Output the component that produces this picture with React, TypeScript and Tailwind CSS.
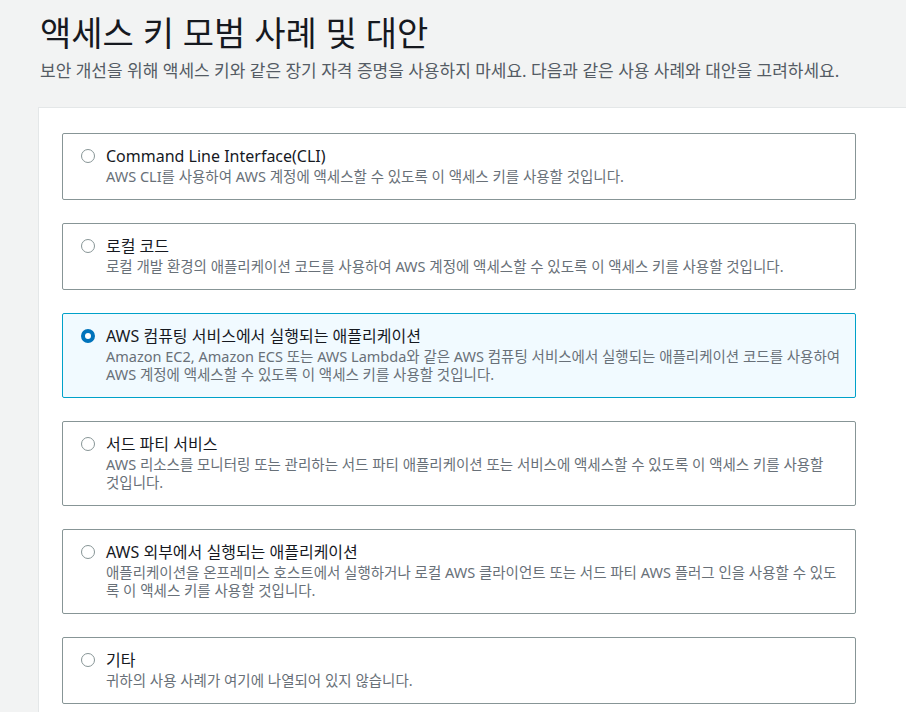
import React from "react";

const items = [
  {
    title: "Command Line Interface(CLI)",
    desc: "AWS CLI를 사용하여 AWS 계정에 액세스할 수 있도록 이 액세스 키를 사용할 것입니다.",
  },
  {
    title: "로컬 코드",
    desc: "로컬 개발 환경의 애플리케이션 코드를 사용하여 AWS 계정에 액세스할 수 있도록 이 액세스 키를 사용할 것입니다.",
  },
  {
    title: "AWS 컴퓨팅 서비스에서 실행되는 애플리케이션",
    desc: "Amazon EC2, Amazon ECS 또는 AWS Lambda와 같은 AWS 컴퓨팅 서비스에서 실행되는 애플리케이션 코드를 사용하여 AWS 계정에 액세스할 수 있도록 이 액세스 키를 사용할 것입니다.",
    selected: true,
  },
  {
    title: "서드 파티 서비스",
    desc: "AWS 리소스를 모니터링 또는 관리하는 서드 파티 애플리케이션 또는 서비스에 액세스할 수 있도록 이 액세스 키를 사용할 것입니다.",
  },
  {
    title: "AWS 외부에서 실행되는 애플리케이션",
    desc: "애플리케이션을 온프레미스 호스트에서 실행하거나 로컬 AWS 클라이언트 또는 서드 파티 AWS 플러그 인을 사용할 수 있도록 이 액세스 키를 사용할 것입니다.",
    breakAll: true,
  },
  {
    title: "기타",
    desc: "귀하의 사용 사례가 여기에 나열되어 있지 않습니다.",
  },
];

export default function App() {
  return (
    <div
      className="min-h-[712px] w-[906px] overflow-hidden bg-[#f2f3f3]"
      style={{ fontFamily: '"Noto Sans", "Noto Sans CJK KR", sans-serif' }}
    >
      <div className="pl-[40px] pt-[12px]">
        <h1 className="text-[34px] leading-[42px] text-[#16191f] font-normal">
          액세스 키 모범 사례 및 대안
        </h1>
        <p className="mt-[5px] text-[17px] leading-[24px] text-[#545b64]">
          보안 개선을 위해 액세스 키와 같은 장기 자격 증명을 사용하지 마세요. 다음과 같은 사용 사례와 대안을 고려하세요.
        </p>
      </div>
      <div className="ml-[38px] mt-[24px] border-l border-t border-[#e4e7e8] bg-white pl-[23px] pr-[50px] pt-[25px] pb-[20px]">
        <div className="flex flex-col gap-[23px]">
          {items.map((it) => (
            <div
              key={it.title}
              className={
                "flex items-start rounded-[2px] border pl-[18px] pr-[9px] pt-[11px] pb-[14px] " +
                (it.selected
                  ? "border-[#00a1c9] bg-[#f1faff]"
                  : "border-[#879596] bg-white")
              }
            >
              <div className="flex h-[22px] shrink-0 items-center">
                {it.selected ? (
                  <div className="h-[14px] w-[14px] rounded-full border-[4px] border-[#0073bb] bg-white" />
                ) : (
                  <div className="h-[14px] w-[14px] rounded-full border border-[#879596] bg-white" />
                )}
              </div>
              <div className="ml-[11px] flex-1">
                <div className="text-[16px] leading-[22px] text-[#16191f]">{it.title}</div>
                <div
                  className={
                    "text-[14.5px] leading-[18px] text-[#687078] " +
                    (it.breakAll ? "break-normal" : "break-keep")
                  }
                >
                  {it.desc}
                </div>
              </div>
            </div>
          ))}
        </div>
      </div>
    </div>
  );
}
